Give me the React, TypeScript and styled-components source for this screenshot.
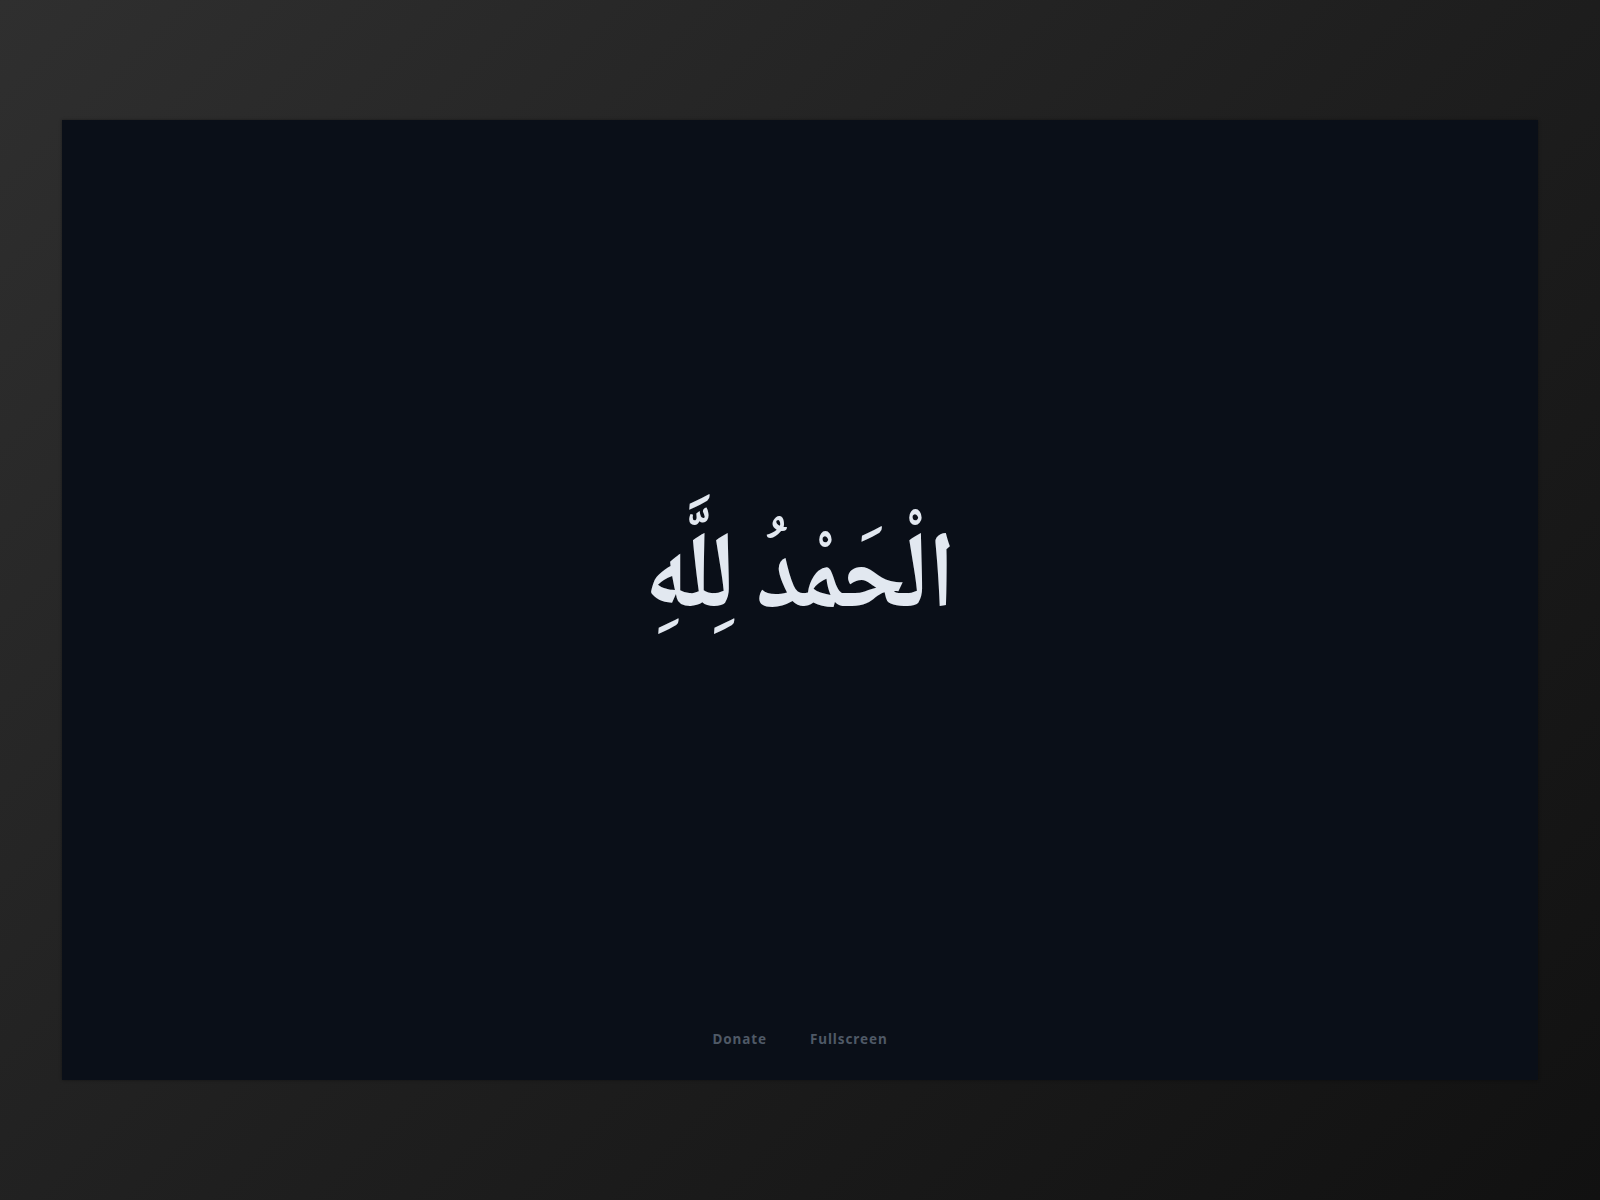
import styled, { createGlobalStyle } from 'styled-components';

const GlobalStyle = createGlobalStyle`
html, body {
  margin: 0;
  padding: 0;
}
`

const Backdrop = styled.div`
width: 1600px;
height: 1200px;
box-sizing: border-box;
padding: 120px 62px;
background: linear-gradient(135deg, #2f2f2f 0%, #1f1f1f 50%, #111111 100%);
`

const Screen = styled.main`
height: 960px;
display: flex;
flex-direction: column;
align-items: center;
background: #0a0f18;
box-shadow: 0 0 3px rgba(0, 0, 0, 0.4);
`

const Verse = styled.div`
flex: 1;
display: flex;
align-items: center;
justify-content: center;
padding-top: 16px;
`

const Arabic = styled.h1`
margin: 0;
font-family: "Noto Naskh Arabic", "Noto Sans Arabic", "Amiri", sans-serif;
font-size: 97px;
font-weight: 700;
line-height: 1.5;
color: #e2e8f0;
transform: scaleY(1.12);
`

const Footer = styled.nav`
display: flex;
gap: 43px;
padding-bottom: 32px;
`

const FooterLink = styled.a`
font-family: "Noto Sans", sans-serif;
font-size: 13.5px;
font-weight: 700;
letter-spacing: 0.9px;
color: #4f5966;
`

export default function App() {
    return (
        <>
            <GlobalStyle />
            <Backdrop>
                <Screen>
                    <Verse>
                        <Arabic dir="rtl" lang="ar">الْحَمْدُ لِلَّهِ</Arabic>
                    </Verse>
                    <Footer>
                        <FooterLink>Donate</FooterLink>
                        <FooterLink>Fullscreen</FooterLink>
                    </Footer>
                </Screen>
            </Backdrop>
        </>
    )
}
